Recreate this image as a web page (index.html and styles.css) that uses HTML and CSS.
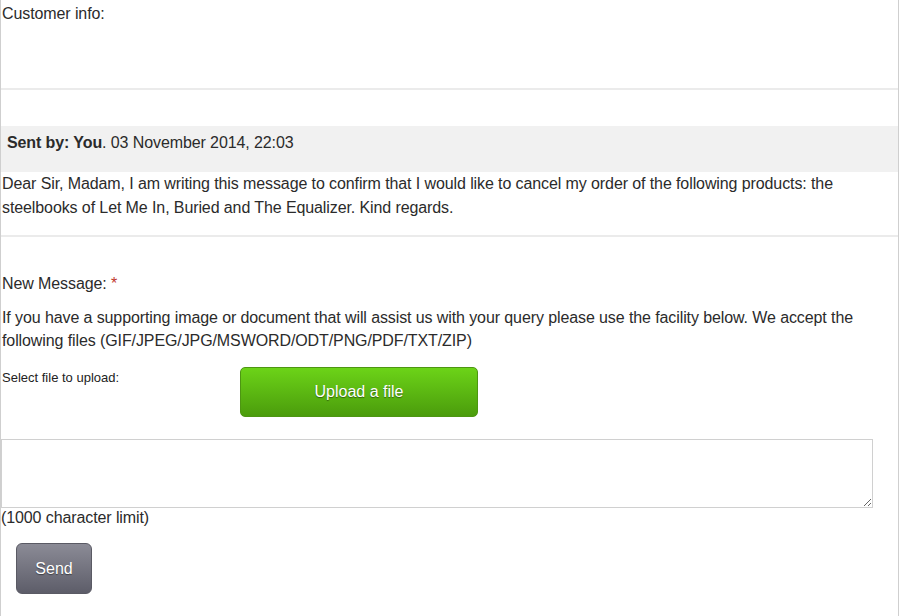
FILE: index.html
```html
<!DOCTYPE html>
<html>
<head>
<meta charset="utf-8">
<link rel="stylesheet" href="styles.css">
</head>
<body>
<div class="page">
  <div class="customer">Customer info:</div>
  <div class="thread">
    <div class="meta"><b>Sent by: You</b>. 03 November 2014, 22:03</div>
    <div class="msg">Dear Sir, Madam, I am writing this message to confirm that I would like to cancel my order of the following products: the steelbooks of Let Me In, Buried and The Equalizer. Kind regards.</div>
  </div>
  <div class="compose">
    <div class="label">New Message: <span class="req">*</span></div>
    <div class="info">If you have a supporting image or document that will assist us with your query please use the facility below. We accept the following files (GIF/JPEG/JPG/MSWORD/ODT/PNG/PDF/TXT/ZIP)</div>
    <div class="upload-row">
      <div class="upload-label">Select file to upload:</div>
      <button class="upload-btn">Upload a file</button>
    </div>
    <textarea class="box"></textarea>
    <div class="limit">(1000 character limit)</div>
    <button class="send">Send</button>
  </div>
</div>
</body>
</html>
```
FILE: styles.css
```css
html, body {
  margin: 0;
  padding: 0;
  background: #fff;
}
body {
  font-family: "Liberation Sans", Arial, Helvetica, sans-serif;
  font-size: 16px;
  letter-spacing: -0.1px;
  color: #2b2b2b;
}
.page {
  width: 897px;
  min-height: 616px;
  border-left: 1px solid #cfcfcf;
  border-right: 1px solid #cfcfcf;
}
.customer {
  height: 86px;
  padding: 2px 0 0 1px;
  line-height: 24px;
  border-bottom: 2px solid #ebebeb;
}
.thread {
  padding-top: 36px;
  border-bottom: 2px solid #ebebeb;
}
.meta {
  background: #f1f1f1;
  padding: 5px 6px 17px 6px;
  line-height: 24px;
}
.meta b {
  font-weight: bold;
}
.msg {
  padding: 0 40px 15px 1px;
  line-height: 24px;
}
.compose {
  padding-top: 35px;
}
.label {
  padding-left: 1px;
  line-height: 24px;
}
.req {
  color: #c0392b;
}
.info {
  margin-top: 10px;
  padding: 0 30px 0 1px;
  line-height: 23px;
}
.upload-row {
  display: flex;
  margin-top: 15px;
}
.upload-label {
  width: 238px;
  padding: 3px 0 0 1px;
  font-size: 13px;
  line-height: 16px;
  letter-spacing: 0;
  color: #222;
}
.upload-btn {
  width: 238px;
  height: 50px;
  border: 1px solid #4d9612;
  border-radius: 5px;
  background: linear-gradient(#6cd318, #4b9c0c);
  color: #fff;
  font-family: "Liberation Sans", Arial, Helvetica, sans-serif;
  font-size: 16px;
  text-shadow: 0 1px 1px rgba(0, 0, 0, 0.45);
  padding: 0;
}
.box {
  display: block;
  box-sizing: border-box;
  width: 872px;
  height: 69px;
  margin: 22px 0 0 0;
  border: 1px solid #d0d0d0;
  resize: vertical;
  font-family: "Liberation Sans", Arial, sans-serif;
}
.limit {
  line-height: 20px;
  padding-left: 0;
}
.send {
  display: block;
  margin: 15px 0 0 15px;
  width: 76px;
  height: 51px;
  border: 1px solid #5a5a64;
  border-radius: 6px;
  background: linear-gradient(#8b8b96, #5d5d69);
  color: #fff;
  font-family: "Liberation Sans", Arial, Helvetica, sans-serif;
  font-size: 16px;
  text-shadow: 0 1px 1px rgba(0, 0, 0, 0.45);
  padding: 0;
}
```
